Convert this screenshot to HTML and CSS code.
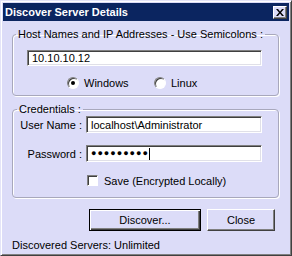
FILE: index.html
```html
<!DOCTYPE html>
<html lang="en">
<head>
<meta charset="UTF-8">
<title>Discover Server Details</title>
<link rel="stylesheet" href="styles.css">
</head>
<body>

<div class="window">
  <div class="titlebar">
    <span class="title">Discover Server Details</span>
    <span class="close-btn">
      <svg width="8" height="7" viewBox="0 0 8 7"><path d="M0 0h2l2 2.5L6 0h2L5 3.5 8 7H6L4 4.5 2 7H0l3-3.5z" fill="#000"/></svg>
    </span>
  </div>

  <fieldset class="group group-hosts">
    <legend>Host Names and IP Addresses - Use Semicolons :</legend>
    <div class="text-field host-field">10.10.10.12</div>
    <div class="radio-row">
      <label class="radio"><span class="radio-dot checked"></span>Windows</label>
      <label class="radio"><span class="radio-dot"></span>Linux</label>
    </div>
  </fieldset>

  <fieldset class="group group-creds">
    <legend>Credentials :</legend>
    <div class="form-grid">
      <span class="field-label">User Name :</span>
      <div class="text-field">localhost\Administrator</div>
      <span class="field-label">Password :</span>
      <div class="text-field password">●●●●●●●●●<span class="caret"></span></div>
      <span></span>
      <label class="check"><span class="check-box"></span>Save (Encrypted Locally)</label>
    </div>
  </fieldset>

  <div class="button-row">
    <button class="btn btn-default">Discover...</button>
    <button class="btn btn-close">Close</button>
  </div>

  <div class="status">Discovered Servers: Unlimited</div>
</div>

</body>
</html>
```

FILE: styles.css
```css
body {
  margin: 0;
  font-family: 'Liberation Sans Narrow', 'Liberation Sans', Arial, sans-serif;
  font-size: 11px;
  color: #000;
}
.window {
  width: 292px;
  height: 256px;
  box-sizing: border-box;
  background-color: #dcdcf8;
  border: 1px solid;
  border-color: #e4e4f8 #404040 #404040 #e4e4f8;
  box-shadow: inset 1px 1px 0 #fff, inset -1px -1px 0 #808080;
  padding: 2px;
}
.titlebar {
  height: 18px;
  background-color: #0b2560;
  display: flex;
  align-items: center;
  justify-content: space-between;
  padding: 0 2px 0 2px;
}
.title {
  color: #fff;
  font-family: 'Liberation Sans', Arial, sans-serif;
  font-weight: bold;
  font-size: 11px;
}
.close-btn {
  width: 14px;
  height: 13px;
  box-sizing: border-box;
  background-color: #dcdcf8;
  border: 1px solid;
  border-color: #fff #404040 #404040 #fff;
  box-shadow: inset -1px -1px 0 #808080;
  display: flex;
  align-items: center;
  justify-content: center;
}
.group {
  margin: 0 10px 0 9px;
  border: 1px solid #a8a8bc;
  border-radius: 4px;
  box-shadow: 1px 1px 0 #fff, inset 1px 1px 0 #fff;
  min-width: 0;
}
.group legend {
  padding: 0 2px;
  line-height: 13px;
  white-space: nowrap;
}
.group-hosts {
  margin-top: 7px;
  padding: 9px 16px 6px 14px;
}
.group-hosts legend {
  margin-left: -11px;
}
.group-creds {
  margin-top: 7px;
  padding: 0 16px 10px 7px;
}
.group-creds legend {
  margin-left: -3px;
}
.text-field {
  height: 17px;
  box-sizing: border-box;
  background-color: #fff;
  border: 1px solid;
  border-color: #808080 #fff #fff #808080;
  box-shadow: inset 1px 1px 0 #404040, inset -1px -1px 0 #e0e0e8;
  padding: 2px 4px 0 4px;
  line-height: 13px;
  white-space: nowrap;
  overflow: hidden;
}
.host-field {
  height: 16px;
  padding-top: 1px;
}
.password {
  font-size: 9px;
  letter-spacing: 1px;
  display: flex;
  align-items: center;
  padding-top: 0;
}
.caret {
  display: inline-block;
  width: 1px;
  height: 12px;
  background-color: #000;
}
.radio-row {
  display: flex;
  margin-top: 10px;
  height: 13px;
  align-items: center;
}
.radio {
  display: flex;
  align-items: center;
  gap: 5px;
}
.radio:first-child {
  margin-left: 40px;
  width: 87px;
}
.radio-dot {
  width: 12px;
  height: 12px;
  box-sizing: border-box;
  border-radius: 50%;
  background-color: #fff;
  border: 1px solid;
  border-color: #808080 #fff #fff #808080;
  box-shadow: inset 1px 1px 0 #404040;
  position: relative;
}
.radio-dot.checked::after {
  content: '';
  position: absolute;
  left: 3px;
  top: 3px;
  width: 4px;
  height: 4px;
  border-radius: 50%;
  background-color: #000;
}
.form-grid {
  display: grid;
  grid-template-columns: 62px 1fr;
  column-gap: 4px;
  row-gap: 12px;
  align-items: center;
}
.field-label {
  text-align: right;
}
.check {
  display: flex;
  align-items: center;
  gap: 6px;
  margin-left: 1px;
  height: 13px;
}
.check-box {
  width: 11px;
  height: 11px;
  box-sizing: border-box;
  background-color: #fff;
  border: 1px solid;
  border-color: #808080 #fff #fff #808080;
  box-shadow: inset 1px 1px 0 #404040;
}
.button-row {
  display: flex;
  gap: 6px;
  margin-top: 11px;
  padding-left: 86px;
}
.btn {
  height: 22px;
  box-sizing: border-box;
  font-family: inherit;
  font-size: 11px;
  color: #000;
  background-color: #dcdcf8;
  border: 1px solid;
  border-color: #fff #404040 #404040 #fff;
  box-shadow: inset -1px -1px 0 #808080;
  padding: 0;
}
.btn-default {
  width: 112px;
  border-color: #000;
  box-shadow: inset 1px 1px 0 #fff, inset -1px -1px 0 #404040, inset -2px -2px 0 #808080;
}
.btn-close {
  width: 68px;
}
.status {
  margin: 8px 0 0 9px;
  line-height: 13px;
}
```
